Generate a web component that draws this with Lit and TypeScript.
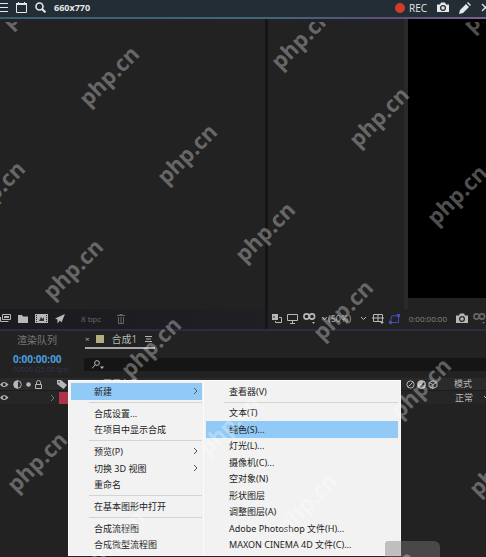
import { LitElement, html, svg, css, nothing } from "lit";
import { customElement } from "lit/decorators.js";
import { classMap } from "lit/directives/class-map.js";

type Entry = { label: string; arrow?: boolean; active?: boolean } | null;

const MAIN_MENU: Entry[] = [
  { label: "新建", arrow: true, active: true },
  null,
  { label: "合成设置..." },
  { label: "在项目中显示合成" },
  null,
  { label: "预览(P)", arrow: true },
  { label: "切换 3D 视图", arrow: true },
  { label: "重命名" },
  null,
  { label: "在基本图形中打开" },
  null,
  { label: "合成流程图" },
  { label: "合成微型流程图" },
];

const NEW_MENU: Entry[] = [
  { label: "查看器(V)" },
  null,
  { label: "文本(T)" },
  { label: "纯色(S)...", active: true },
  { label: "灯光(L)..." },
  { label: "摄像机(C)..." },
  { label: "空对象(N)" },
  { label: "形状图层" },
  { label: "调整图层(A)" },
  { label: "Adobe Photoshop 文件(H)..." },
  { label: "MAXON CINEMA 4D 文件(C)..." },
];

const icon = (w: number, h: number, body: unknown) =>
  html`<svg width=${w} height=${h} viewBox="0 0 ${w} ${h}" fill="none" stroke="currentColor" aria-hidden="true">${body}</svg>`;

const icons = {
  list: icon(8, 11, svg`<path d="M0 1.5h8M0 5.5h8M0 9.5h8"/>`),
  window: icon(11, 11, svg`<path d="M.5 1.5h10v9H.5z"/><path d="M0 2h11" stroke-width="2"/><path d="M2.500 0v2M8.500 0v2"/>`),
  search: icon(11, 11, svg`<circle cx="4.5" cy="4.5" r="3.5" stroke-width="1.6"/><path d="M7 7l3.4 3.4" stroke-width="2"/>`),
  camera: icon(12, 11, svg`<path d="M0 2.5h3L4 .6h4l1 1.9h3V10H0z" fill="currentColor" stroke="none"/><circle cx="6" cy="6" r="2.4" stroke="#252d34" stroke-width="1.3"/>`),
  pencil: icon(12, 12, svg`<path d="M0 12l1-4 6-6 3 3-6 6zM8 1l1-1 3 3-1 1z" fill="currentColor" stroke="none"/>`),
  cross: icon(9, 9, svg`<path d="M1 1l7 7M8 1L1 8" stroke-width="1.3"/>`),
  footage: icon(11, 9, svg`<path d="M2.5.5h8v5h-8zM.5 3v4.500h8"/><path d="M4 3h5" stroke-width="2"/>`),
  folder: icon(10, 8, svg`<path d="M0 0h4l1 1.500h5V8H0z" fill="currentColor" stroke="none"/>`),
  comp: icon(13, 9, svg`<path d="M0 0h13v9H0z" fill="currentColor" stroke="none"/><path d="M1.500 1v7M11.500 1v7" stroke="#222" stroke-dasharray="1 1"/><path d="M4 7l2-4 1.500 2L9 3v4z" fill="#333" stroke="none"/>`),
  rocket: icon(10, 10, svg`<path d="M10 0L6.500 8.500 5 6.500 2.500 9.500V5.500L0 4.500z" fill="currentColor" stroke="none"/>`),
  trash: icon(8, 10, svg`<path d="M0 1.500h8M2.500.5h3M1.500 3v6.500h5V3M4 3v6"/>`),
  layers: icon(10, 9, svg`<path d="M0 0h6v6H0z" fill="currentColor" stroke="none"/><path d="M2 2v2" stroke="#222"/><path d="M7 3.500h2.500v5h-6V7"/>`),
  monitor: icon(11, 10, svg`<path d="M.5.5h10v6H.5zM5.500 7v2M3 9.500h5"/>`),
  mask: icon(13, 11, svg`<circle cx="3.500" cy="3.500" r="2.600" stroke-width="1.600"/><circle cx="9" cy="3.500" r="2.600" stroke-width="1.600"/><path d="M9 9l3 0-1.500 2z" fill="currentColor" stroke="none"/>`),
  down: icon(7, 5, svg`<path d="M1 1l2.500 2.500L6 1"/>`),
  grid: icon(12, 10, svg`<path d="M1.500.5h9v7h-9zM6 0v8M0 4h12"/><path d="M8 8h4l-2 2z" fill="currentColor" stroke="none"/>`),
  region: icon(11, 10, svg`<path d="M1.500 8.500L2.500 2l7-.5v7z"/><path d="M0 7h3v3H0zM8 0h3v3H8z" fill="currentColor" stroke="none"/>`),
  eye: icon(9, 7, svg`<path d="M0 3.500Q4 -1.500 8.500 3.500 4 8.500 0 3.500z" fill="currentColor" stroke="none"/><circle cx="4.200" cy="3.500" r="1.500" fill="#222" stroke="none"/>`),
  half: icon(9, 9, svg`<circle cx="4.500" cy="4.500" r="3.800"/><path d="M4.500 1v7a3.500 3.500 0 0 1 0-7z" fill="currentColor"/>`),
  blend: icon(9, 9, svg`<circle cx="4.500" cy="4.500" r="4" fill="currentColor"/><path d="M2.500 7l4.500-5a3.500 3.500 0 0 1-4.500 5z" fill="#2a2a2a" stroke="none"/>`),
  dot: icon(5, 5, svg`<circle cx="2.500" cy="2.500" r="2.300" fill="currentColor" stroke="none"/>`),
  lock: icon(7, 9, svg`<path d="M1.500 4V2.500a2 2 0 0 1 4 0V4"/><path d="M.5 4.500h6v4h-6z"/>`),
  tag: icon(10, 9, svg`<path d="M0 0h4l6 5-3.500 4L0 4z" fill="currentColor" stroke="none"/><circle cx="2" cy="2" r=".8" fill="#222" stroke="none"/>`),
  right: icon(5, 8, svg`<path d="M1 1l3 3-3 3"/>`),
  burger: icon(7, 6, svg`<path d="M0 .5h7M1 3h5M0 5.500h7"/>`),
  find: icon(13, 9, svg`<circle cx="5" cy="3" r="2.400"/><path d="M3.200 4.800L0 8.500"/><path d="M8 6.500h4L10 9z" fill="currentColor" stroke="none"/>`),
  blur: icon(9, 9, svg`<circle cx="4.500" cy="4.500" r="3.600"/><path d="M2.500 6.500l4-4"/>`),
  cube: icon(10, 9, svg`<path d="M1 2.500L5 .8l4 1.700v4L5 8.500 1 6.500zM1 2.500l4 2 4-2M5 4.500v4"/>`),
};

@customElement("popup-menu")
class PopupMenu extends LitElement {
  static properties = { entries: { attribute: false }, label: { type: String } };
  declare entries: Entry[];
  declare label: string;
  static styles = css`
    :host { display: block; }
    .menu {
      display: flex; flex-direction: column; box-sizing: border-box; height: 100%;
      padding: 2px; background: #f2f2f2; border: 1px solid #fafafa;
    }
    button {
      flex: 1; min-height: 0; display: flex; align-items: center; justify-content: space-between;
      padding: 0 4px 0 23px; border: 0; background: none; color: #222; text-align: left;
      font: 9px/1 "Noto Sans", "Noto Sans CJK SC", sans-serif; white-space: nowrap;
    }
    .active { background: #91c9f7; }
    .rule { height: 1px; margin: 2px 0 2px 18px; background: #d4d4d4; }
    svg { color: #555; }
  `;
  render() {
    return html`<div class="menu" role="menu" aria-label=${this.label}>
      ${this.entries.map((e) =>
        e === null
          ? html`<div class="rule" role="separator"></div>`
          : html`<button role="menuitem" class=${classMap({ active: !!e.active })}>
              <span>${e.label}</span>${e.arrow ? icons.right : nothing}
            </button>`
      )}
    </div>`;
  }
}

@customElement("water-mark")
class WaterMark extends LitElement {
  static styles = css`
    :host { display: block; overflow: hidden; pointer-events: none; }
    svg { display: block; width: 100%; height: 100%; }
    text { font: 700 22px "Open Sans", sans-serif; fill: #fff; fill-opacity: 0.32; text-anchor: middle; }
  `;
  render() {
    const marks: unknown[] = [];
    for (let j = -3; j <= 4; j++) {
      for (let i = -5; i <= 8; i++) {
        const x = 111 + 78 * i + 114 * j;
        const y = 56 + 78 * i - 115 * j;
        if (x < -36 || x > 522 || y < -36 || y > 570) continue;
        marks.push(svg`<text transform="translate(${x} ${y}) rotate(-45)" y="5">php.cn</text>`);
      }
    }
    return html`<svg aria-hidden="true">${marks}</svg>`;
  }
}

@customElement("app-root")
class AppRoot extends LitElement {
  static styles = css`
    :host {
      display: flex; flex-direction: column; position: relative; min-height: 100vh; overflow: hidden;
      background: #222; color: #b8b8b8; font: 10px/12px "Open Sans", "Noto Sans CJK SC", sans-serif;
    }
    svg { display: block; flex: none; }
    button { display: block; padding: 0; border: 0; background: none; color: inherit; font: inherit; white-space: nowrap; }
    .recorder {
      display: flex; justify-content: space-between; align-items: center; height: 17px; padding-bottom: 2px;
      box-sizing: border-box; background: #232d35; color: #e4e8ea; overflow: hidden;
    }
    .tools { display: flex; align-items: center; gap: 8px; }
    .size { font-size: 9px; font-weight: 700; }
    .rec { display: flex; align-items: center; gap: 4px; }
    .bulb { width: 10px; height: 10px; border-radius: 5px; background: #d23b2b; }
    .actions { margin-right: -4px; gap: 10px; }
    .accent { height: 2px; background: linear-gradient(90deg, #3c5f6c, #3e6973 55%, #5d5078 80%, #7a5f96); }
    .workspace { flex: 1; display: flex; min-height: 308px; }
    .panel { display: flex; flex-direction: column; min-width: 0; }
    .project { flex: 265; border-right: 3px solid #151515; }
    .viewer { flex: 218; }
    .body { flex: 1; background: linear-gradient(#23202b, #222 6px); }
    .viewer .body { display: flex; }
    .edge { flex: 138; border-right: 4px solid #292929; box-sizing: border-box; }
    .canvas { flex: 79; margin-bottom: 11px; background: #000; }
    .foot { display: flex; align-items: center; height: 20px; box-sizing: border-box; padding-bottom: 1px; }
    .project .foot { gap: 7px; background: linear-gradient(90deg, #1b1b1f, #202024); }
    .viewer .foot { gap: 5px; padding-left: 4px; overflow: hidden; }
    .dim { color: #666; font-size: 8px; }
    .bpc { margin: 0 9px; }
    .zoom { font-size: 9px; width: 34px; color: #aaa; display: flex; align-items: center; }
    .blue { color: #4a49b8; }
    .clock { font-size: 8px; color: #858585; margin: 0 4px; }
    .timeline { min-height: 228px; border-top: 2px solid #2d2c40; box-sizing: border-box; position: relative; }
    .tabs { display: flex; height: 19px; padding-left: 17px; gap: 28px; box-sizing: border-box; }
    .tab { height: 17px; }
    .queue { color: #777; }
    .current { display: flex; align-items: center; gap: 8px; height: 18px; width: 70px; border-bottom: 2px solid #a8a8a8; box-sizing: border-box; }
    .tiny { font-size: 8px; margin-right: -2px; }
    .swatch { width: 8px; height: 8px; background: #b1ae84; }
    .timebar { display: flex; align-items: center; height: 28px; }
    .time { width: 84px; padding-left: 13px; box-sizing: border-box; color: #499ddd; font-size: 10px; font-weight: 700; }
    .fps { display: block; font-size: 7px; line-height: 10px; font-weight: 400; color: #37344f; }
    .find { flex: 1; display: flex; align-items: center; height: 13px; padding-left: 8px; background: #151515; }
    .find input { flex: 1; min-width: 0; height: 12px; padding: 0; border: 0; background: none; color: #bbb; outline: none; }
    .columns, .layer { display: flex; align-items: center; justify-content: space-between; background: #2a2a2a; }
    .columns { height: 12px; }
    .layer { height: 14px; background: #262626; border-top: 1px solid #1c1c1c; box-sizing: border-box; }
    .group { display: flex; align-items: center; gap: 4px; }
    .switches { gap: 2px; }
    .columns .tag { margin-left: 11px; }
    .name { margin-left: 32px; font-size: 9px; }
    .red { width: 10px; height: 12px; background: #ad3349; }
    .twirl { margin-left: 37px; color: #777; }
    .mode { margin: 0 14px; font-size: 9px; }
    .layer .mode { margin-right: 8px; }
    .layer .switches { margin-right: -4px; }
    .menu, .submenu { position: absolute; top: 49px; height: 176px; }
    .menu { left: 68px; width: 137px; }
    .submenu { left: 203px; width: 198px; }
    .patch { position: absolute; left: 385px; bottom: 0; width: 55px; height: 16px; background: rgba(122, 122, 122, 0.43); border-radius: 3px 6px 0 0; }
    .marks { position: absolute; inset: 22px 0 0; }
  `;
  render() {
    return html`
      <header class="recorder">
        <div class="tools">
          <button aria-label="列表">${icons.list}</button>
          <button aria-label="窗口">${icons.window}</button>
          <button aria-label="缩放">${icons.search}</button>
          <span class="size">660x770</span>
        </div>
        <div class="tools actions">
          <button class="rec"><span class="bulb"></span>REC</button>
          <button aria-label="截图">${icons.camera}</button>
          <button aria-label="编辑">${icons.pencil}</button>
          <button aria-label="关闭">${icons.cross}</button>
        </div>
      </header>
      <div class="accent"></div>
      <main class="workspace">
        <section class="panel project">
          <div class="body"></div>
          <div class="foot">
            ${icons.footage}${icons.folder}${icons.comp}${icons.rocket}
            <button class="dim bpc">8 bpc</button>
            <button class="dim" aria-label="删除">${icons.trash}</button>
          </div>
        </section>
        <section class="panel viewer">
          <div class="body"><div class="edge"></div><div class="canvas"></div></div>
          <div class="foot">
            ${icons.layers}${icons.monitor}${icons.mask}
            <button class="zoom">${icons.down}(50%)</button>
            ${icons.down}${icons.grid}<span class="blue">${icons.region}</span>
            <span class="clock">0:00:00:00</span>
            ${icons.camera}<span class="dim">${icons.mask}</span>
          </div>
        </section>
      </main>
      <section class="timeline">
        <nav class="tabs">
          <button class="tab queue">渲染队列</button>
          <button class="current"><span class="tiny">×</span><span class="swatch"></span><span>合成1</span>${icons.burger}</button>
        </nav>
        <div class="timebar">
          <div class="time">0:00:00:00<span class="fps">00000 (25.00 fps)</span></div>
          <label class="find">${icons.find}<input aria-label="搜索图层" /></label>
        </div>
        <div class="columns">
          <div class="group">${icons.eye}${icons.half}${icons.dot}${icons.lock}<span class="tag">${icons.tag}</span><span class="name">图层名称</span></div>
          <div class="group switches">${icons.blur}${icons.blend}${icons.cube}<span class="mode">模式</span></div>
        </div>
        <div class="layer">
          <div class="group">${icons.eye}<span class="twirl">${icons.right}</span><span class="red"></span></div>
          <div class="group switches"><span class="mode">正常</span>${icons.down}</div>
        </div>
        <popup-menu class="menu" label="合成" .entries=${MAIN_MENU}></popup-menu>
        <popup-menu class="submenu" label="新建" .entries=${NEW_MENU}></popup-menu>
      </section>
      <div class="patch"></div>
      <water-mark class="marks"></water-mark>
    `;
  }
}
